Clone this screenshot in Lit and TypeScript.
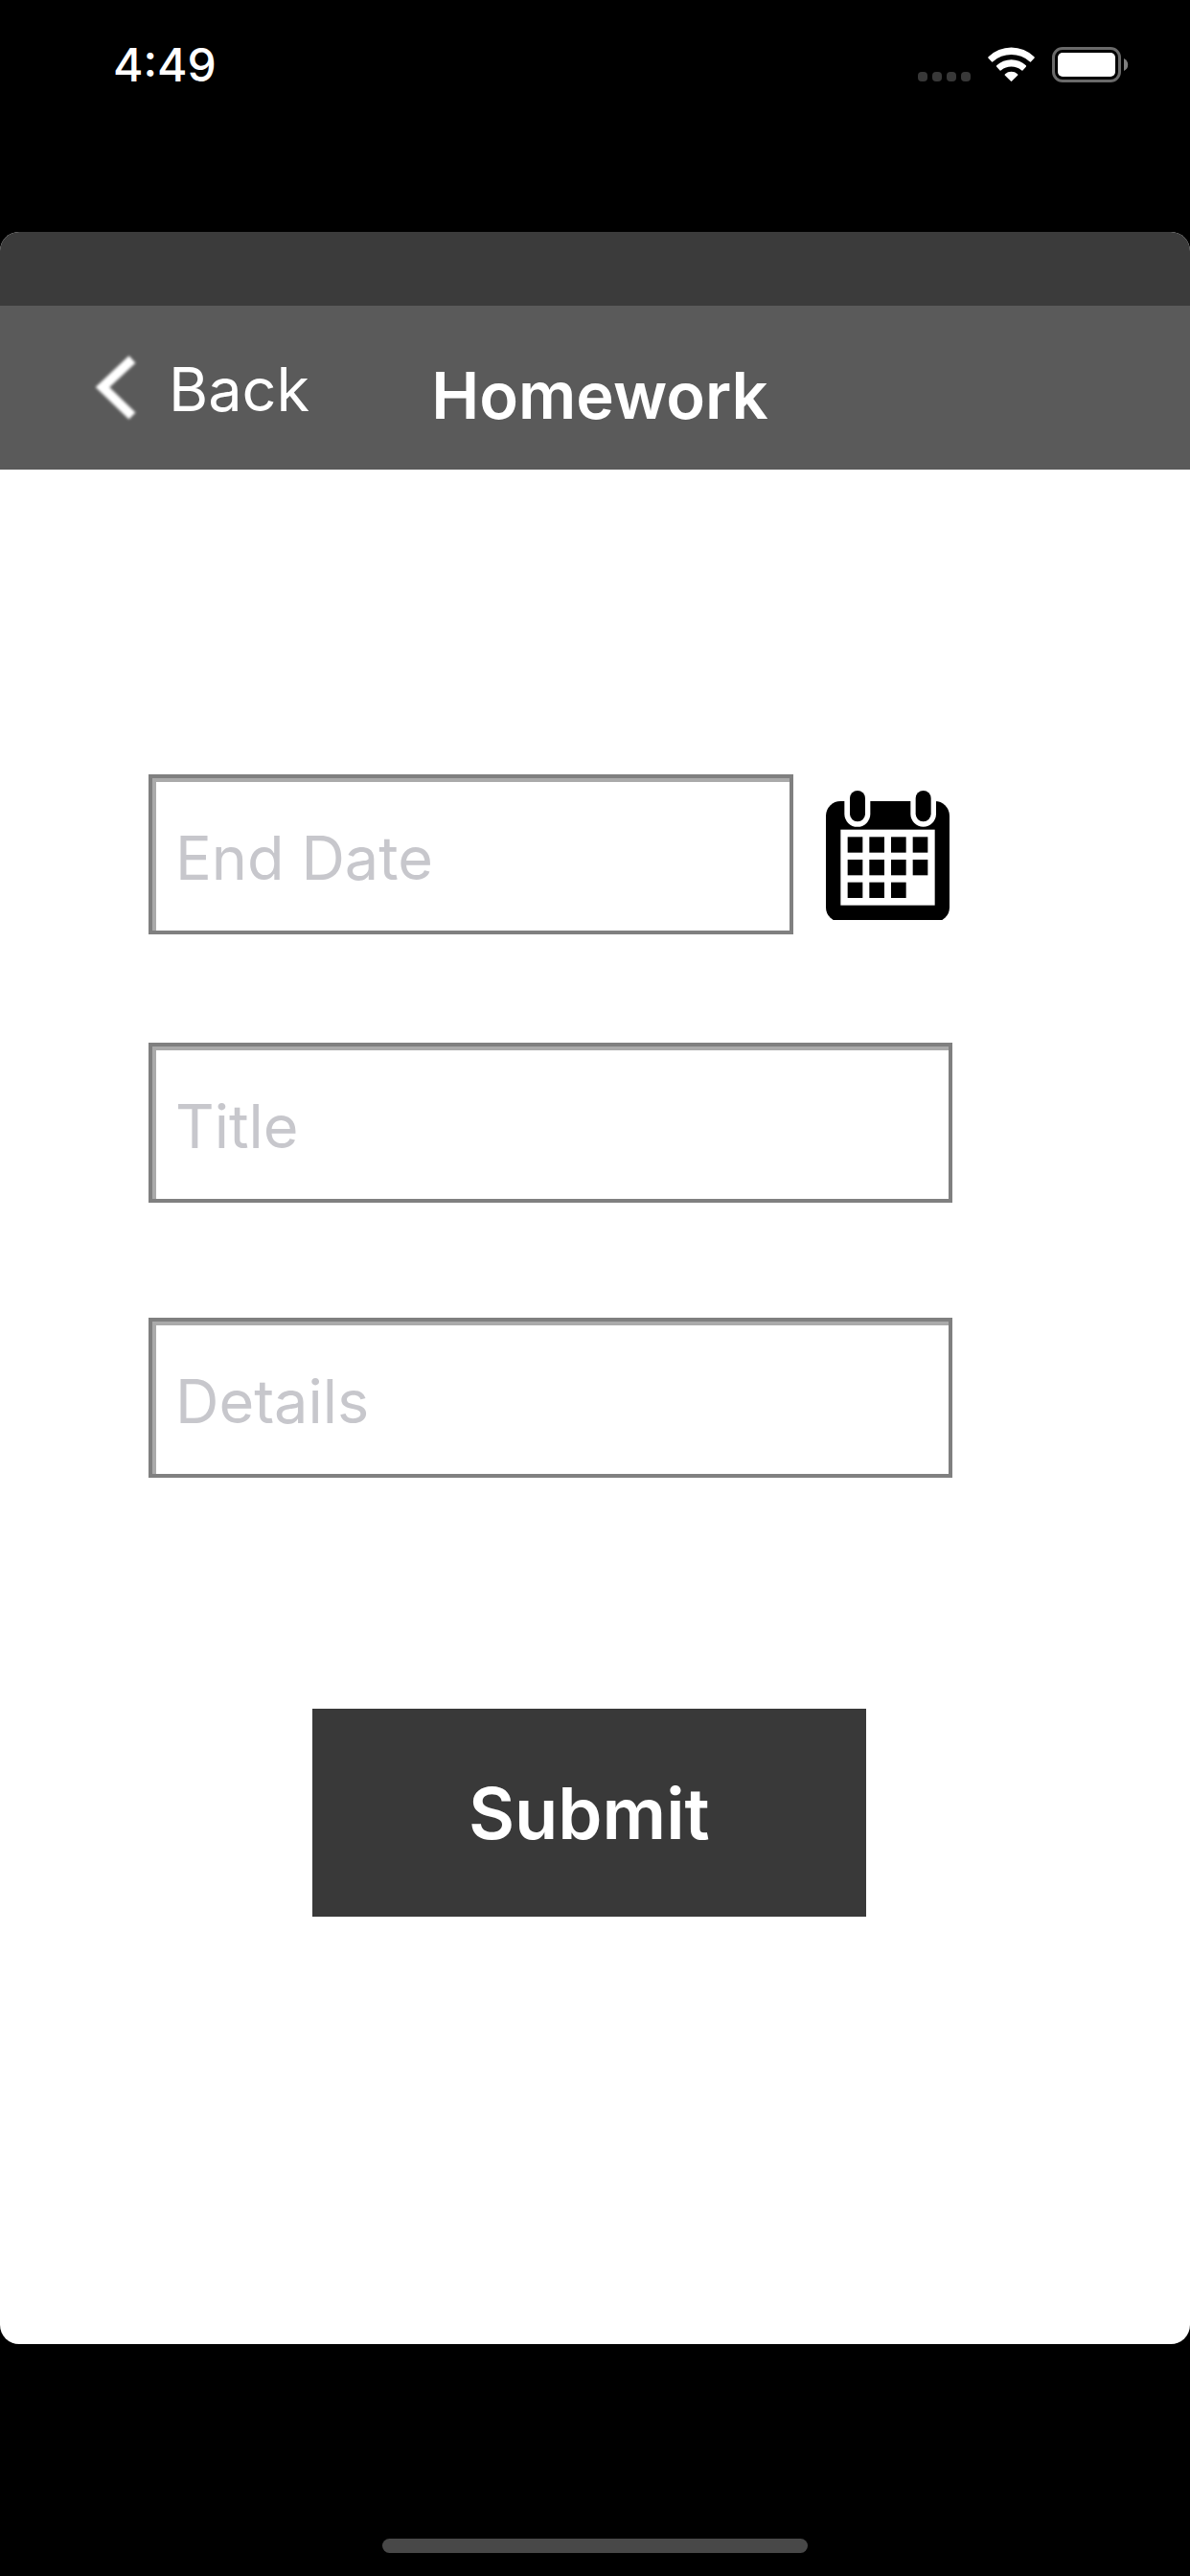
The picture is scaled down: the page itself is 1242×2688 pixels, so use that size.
import { LitElement, html, css, svg } from "lit";
import { customElement } from "lit/decorators.js";

const signalDots = [0, 15, 30, 45];

const calendarDays = [
  [252, 250], [320, 250], [388, 250], [456, 250],
  [252, 321], [320, 321], [388, 321], [456, 321],
  [252, 392], [320, 392], [388, 392],
];

@customElement("status-bar")
class StatusBar extends LitElement {
  static styles = css`
    :host {
      display: flex;
      justify-content: space-between;
      align-items: flex-start;
      box-sizing: border-box;
      height: 242px;
      padding: 40px 64px 0 118px;
      color: #fff;
    }
    .time {
      font-size: 48px;
      line-height: 56px;
      font-weight: 500;
    }
    .icons {
      display: flex;
      align-items: flex-end;
      padding-top: 9px;
    }
    .signal {
      margin-right: 18px;
      margin-bottom: 1px;
    }
    .wifi {
      margin-right: 18px;
      margin-bottom: 1px;
    }
    svg {
      display: block;
    }
  `;

  render() {
    return html`
      <time class="time">4:49</time>
      <div class="icons">
        <svg class="signal" width="55" height="10" viewBox="0 0 55 10" aria-hidden="true">
          ${signalDots.map((x) => svg`<rect x=${x} y="0" width="10" height="10" rx="4" fill="#383838" />`)}
        </svg>
        <svg class="wifi" width="49" height="36" viewBox="0 0 49 36" fill="#fff" aria-hidden="true">
          <path d="M0.6 10.2A34 34 0 0 1 48.4 10.2Q49.2 11 48.4 11.8L44.9 15.4Q44.4 16 43.6 15.3A28.5 28.5 0 0 0 5.4 15.3Q4.6 16 4.1 15.4L0.6 11.8Q-0.2 11 0.6 10.2Z" />
          <path d="M9.2 19.2A22.5 22.5 0 0 1 39.8 19.2Q40.6 20 39.8 20.8L36.4 24.4Q35.8 25 35 24.3A16.5 16.5 0 0 0 14 24.3Q13.2 25 12.6 24.4L9.2 20.8Q8.4 20 9.2 19.2Z" />
          <path d="M18 28.2A10 10 0 0 1 31 28.2Q31.8 29 31 29.8L25.2 35.6Q24.5 36.2 23.8 35.6L18 29.8Q17.2 29 18 28.2Z" />
        </svg>
        <svg width="80" height="37" viewBox="0 0 80 37" aria-hidden="true">
          <rect x="1.5" y="1.5" width="69" height="34" rx="9.5" fill="none" stroke="#6a6a6a" stroke-width="3" />
          <rect x="6" y="6" width="60" height="25" rx="5" fill="#fff" />
          <path d="M75 12Q79.200 14 79.200 18.500T75 25Z" fill="#808080" />
        </svg>
      </div>
    `;
  }
}

@customElement("app-root")
class AppRoot extends LitElement {
  static styles = css`
    :host {
      display: flex;
      flex-direction: column;
      min-height: 100vh;
      background: #000;
      font-family: Inter, "Liberation Sans", sans-serif;
    }
    .sheet {
      flex: 1;
      display: flex;
      flex-direction: column;
      overflow: hidden;
      border-radius: 20px;
      background: #fff;
    }
    .strip {
      height: 77px;
      background: #3b3b3b;
    }
    .bar {
      display: grid;
      grid-template-columns: 1fr auto 1fr;
      align-items: start;
      height: 171px;
      padding-left: 10px;
      background: #5a5a5a;
      color: #fff;
    }
    button {
      border: 0;
      margin: 0;
      padding: 0;
      background: none;
      color: inherit;
      font: inherit;
      cursor: pointer;
    }
    .back {
      display: flex;
      align-items: center;
      gap: 28px;
      justify-self: start;
      margin: 48px 0 0 88px;
      font-size: 63px;
      line-height: 78px;
    }
    .title {
      margin: 53px 0 0;
      font-size: 67px;
      line-height: 82px;
      font-weight: 600;
    }
    .form {
      display: flex;
      flex-direction: column;
      padding: 318px 20% 0 155px;
    }
    .row {
      display: flex;
      align-items: center;
      gap: 34px;
      padding-right: 3px;
      margin-bottom: 113px;
    }
    .field {
      box-sizing: border-box;
      flex: 1;
      min-width: 0;
      width: 100%;
      height: 167px;
      margin: 0;
      padding: 6px 24px 0;
      border: 4px solid #808080;
      border-radius: 0;
      box-shadow: inset 4px 4px 0 #aaa;
      background: #fff;
      outline: 0;
      color: #000;
      font-family: inherit;
      font-size: 63px;
    }
    .wide {
      flex: none;
      margin-bottom: 120px;
    }
    .field::placeholder {
      color: #c7c7cc;
      opacity: 1;
    }
    .pick {
      padding-top: 2px;
    }
    .submit {
      align-self: center;
      width: 578px;
      height: 217px;
      margin: 121px 0 80px 81px;
      background: #393939;
      color: #fff;
      font-size: 74px;
      font-weight: 600;
    }
    .foot {
      display: flex;
      justify-content: center;
      align-items: flex-end;
      box-sizing: border-box;
      height: 242px;
      padding-bottom: 24px;
    }
    .home {
      width: 444px;
      height: 15px;
      border-radius: 8px;
      background: #484848;
    }
    svg {
      display: block;
      overflow: visible;
    }
    .clip {
      overflow: hidden;
    }
  `;

  render() {
    return html`
      <status-bar></status-bar>
      <main class="sheet">
        <div class="strip"></div>
        <header class="bar">
          <button class="back" type="button">
            <svg width="50" height="78" viewBox="0 0 50 78" aria-hidden="true">
              <defs>
                <filter id="soft" x="-30%" y="-30%" width="160%" height="160%">
                  <feGaussianBlur stdDeviation="1.5" />
                </filter>
              </defs>
              <path d="M40 8L9 37L40 67" fill="none" stroke="#fff" stroke-width="10" filter="url(#soft)" />
            </svg>
            Back
          </button>
          <h1 class="title">Homework</h1>
        </header>
        <form class="form" @submit=${(e: Event) => e.preventDefault()}>
          <div class="row">
            <input class="field" type="text" placeholder="End Date" aria-label="End Date" />
            <button class="pick" type="button" aria-label="Choose date">
              <svg class="clip" width="129" height="135" viewBox="184 105 387 405" aria-hidden="true">
                <rect x="184" y="138" width="387" height="378" rx="46" />
                <g fill="#fff">
                  <path d="M242 130H323V178A40.500 40.500 0 0 1 242 178Z" />
                  <path d="M449 130H529V178A40 40 0 0 1 449 178Z" />
                  <rect x="230" y="227" width="295" height="237" />
                </g>
                <rect x="259" y="105" width="48" height="97" rx="24" />
                <rect x="465" y="105" width="48" height="97" rx="24" />
                ${calendarDays.map(([x, y]) => svg`<rect x=${x} y=${y} width="47" height="49" />`)}
              </svg>
            </button>
          </div>
          <input class="field wide" type="text" placeholder="Title" aria-label="Title" />
          <input class="field wide" type="text" placeholder="Details" aria-label="Details" />
          <button class="submit" type="submit">Submit</button>
        </form>
      </main>
      <footer class="foot"><div class="home"></div></footer>
    `;
  }
}
